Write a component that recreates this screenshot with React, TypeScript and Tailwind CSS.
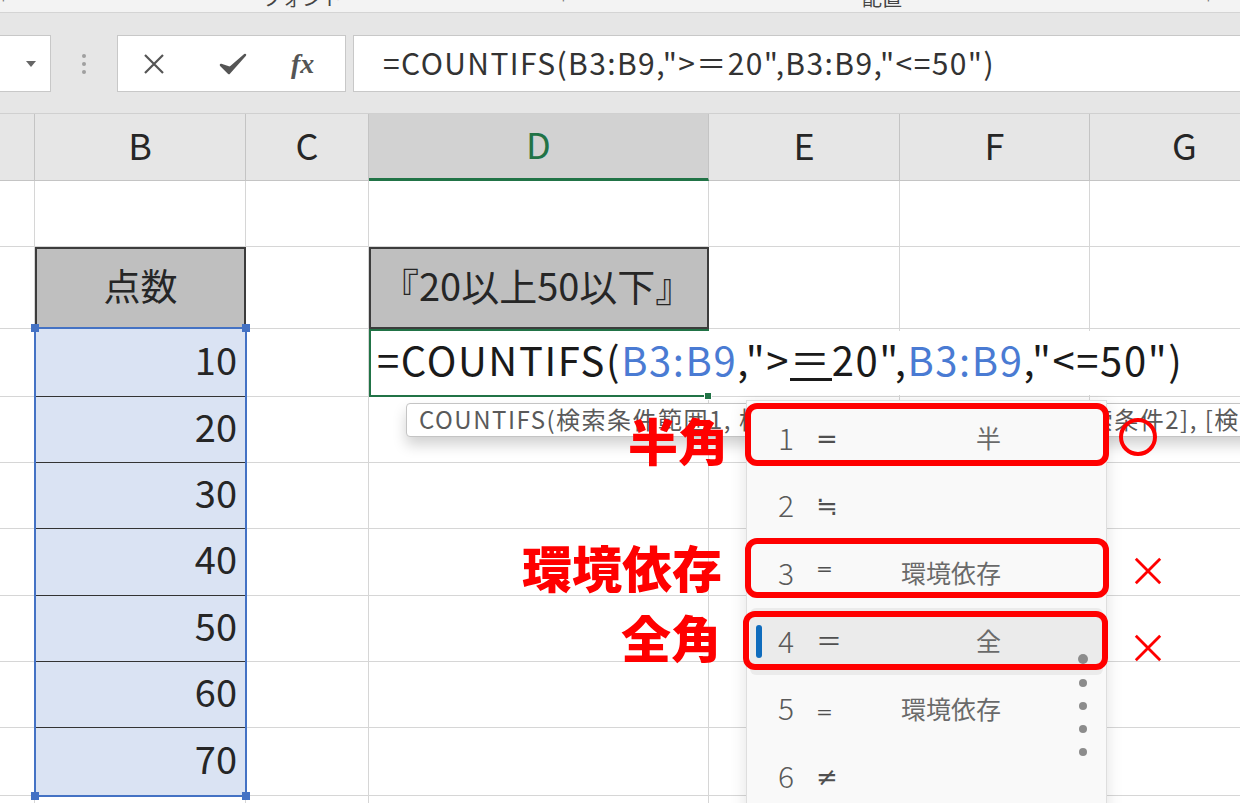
import React from "react";

const JP = "font-['Noto_Sans_CJK_JP','Noto_Sans',sans-serif]";

const colHeaders = ["", "B", "C", "D", "E", "F", "G"];
const scores = [10, 20, 30, 40, 50, 60, 70];
const rowCount = 10;

type Candidate = {
  num: string;
  sym: string;
  note?: string;
  selected?: boolean;
  symClass: string;
};

const candidates: Candidate[] = [
  { num: "1", sym: "=", note: "半", symClass: "text-[26px]" },
  { num: "2", sym: "≒", symClass: "text-[26px]" },
  { num: "3", sym: "⁼", note: "環境依存", symClass: "text-[32px] mt-[2px]" },
  { num: "4", sym: "＝", note: "全", selected: true, symClass: "text-[26px]" },
  { num: "5", sym: "₌", note: "環境依存", symClass: "text-[32px] -mt-[4px]" },
  { num: "6", sym: "≠", symClass: "text-[26px]" },
];

const XMark = ({ className }: { className?: string }) => (
  <svg viewBox="0 0 32 32" className={className}>
    <path d="M3 3 L29 29 M29 3 L3 29" stroke="#ff0000" strokeWidth="3" fill="none" />
  </svg>
);

const HeaderCell = ({ label, active }: { label: string; active?: boolean }) => (
  <div
    className={
      active
        ? "flex items-center justify-center border-r border-r-[#c4c4c4] border-b-[3px] border-b-[#217346] bg-[#d2d2d2] pb-[6px] text-[36px] leading-none text-[#217346]"
        : "flex items-center justify-center border-r border-b border-[#c4c4c4] bg-[#e6e6e6] pb-[6px] text-[36px] leading-none text-[#262626]"
    }
  >
    {label}
  </div>
);

const FormulaOverflow = () => (
  <span className="absolute left-0 top-0 z-10 flex h-full w-[865px] items-center whitespace-nowrap bg-white pb-[8px] pl-[6px] text-[40px] leading-none tracking-[1.6px] text-[#1a1a1a]">
    =COUNTIFS(<span className="text-[#4a7bd3]">B3:B9</span>,"&gt;
    <span className="border-b-[3px] border-[#1a1a1a] pb-[1px]">＝</span>
    20",<span className="text-[#4a7bd3]">B3:B9</span>,"&lt;=50")
  </span>
);

const SheetCell = ({ r, c }: { r: number; c: number }) => {
  const base = "border-r border-b border-[#d6d6d6] bg-white";
  if (r === 2 && c === 1) {
    return (
      <div className="flex items-center justify-center border-2 border-[#3c3c3c] bg-[#bfbfbf] pb-[6px] text-[37px] leading-none text-[#262626]">
        点数
      </div>
    );
  }
  if (r === 2 && c === 3) {
    return (
      <div className="flex items-center border-2 border-[#3c3c3c] bg-[#bfbfbf] pb-[6px] pl-[10px] text-[38px] leading-none text-[#262626]">
        『20以上50以下』
      </div>
    );
  }
  if (r >= 3 && r <= 9 && c === 1) {
    return (
      <div className="flex items-center justify-end border-r border-b border-r-[#d6d6d6] border-b-[#333333] bg-[#dae3f3] pb-[8px] pr-[8px] text-[38px] leading-none text-[#262626]">
        {scores[r - 3]}
      </div>
    );
  }
  if (r === 3 && c === 3) {
    return (
      <div className="relative border-2 border-[#217346] bg-white">
        <FormulaOverflow />
        <span className="absolute -bottom-[5px] -right-[5px] z-20 h-[8px] w-[8px] border border-white bg-[#217346]" />
      </div>
    );
  }
  return <div className={base} />;
};

const TopStrip = () => (
  <div className={`relative h-[13px] overflow-hidden border-b border-[#d4d4d4] bg-[#f3f3f3] ${JP}`}>
    <div className="flex -translate-y-[12px] text-[20px] leading-none text-[#444]">
      <span className="ml-[2px] w-[260px] text-[16px] text-[#777]">⌐</span>
      <span className="w-[300px]">フォント</span>
      <span className="w-[300px] text-[16px] text-[#777]">⌐</span>
      <span className="w-[345px]">配置</span>
      <span className="text-[16px] text-[#777]">⌐</span>
    </div>
  </div>
);

const FormulaBar = () => (
  <div className="flex h-[100px] items-start bg-[#e6e6e6] pt-[22px]">
    <div className="flex h-[57px] w-[51px] items-center justify-end border border-l-0 border-[#c8c8c8] bg-white pr-[14px]">
      <svg viewBox="0 0 10 6" className="h-[6px] w-[10px]">
        <path d="M0 0 L10 0 L5 6 Z" fill="#666" />
      </svg>
    </div>
    <div className="flex h-[57px] w-[66px] flex-col items-center justify-center gap-[4px]">
      <span className="h-[4px] w-[4px] rounded-full bg-[#a0a0a0]" />
      <span className="h-[4px] w-[4px] rounded-full bg-[#a0a0a0]" />
      <span className="h-[4px] w-[4px] rounded-full bg-[#a0a0a0]" />
    </div>
    <div className="flex h-[57px] w-[229px] items-center border border-[#c8c8c8] bg-white">
      <svg viewBox="0 0 24 24" className="ml-[24px] h-[24px] w-[24px]">
        <path d="M3 3 L21 21 M21 3 L3 21" stroke="#555" strokeWidth="2.2" fill="none" />
      </svg>
      <svg viewBox="0 0 28 24" className="ml-[53px] h-[24px] w-[28px]">
        <path d="M2 13 L10 21 L26 3 L11 16 Z" fill="#555" stroke="#555" strokeWidth="2.5" strokeLinejoin="round" />
      </svg>
      <span className="ml-[44px] font-['Liberation_Serif',serif] text-[28px] font-bold italic leading-none text-[#555]">
        fx
      </span>
    </div>
    <div className="ml-[7px] flex h-[57px] flex-1 items-center border border-r-0 border-[#c8c8c8] bg-white pl-[29px]">
      <span className={`${JP} whitespace-nowrap pb-[3px] text-[30px] leading-none tracking-[1.4px] text-[#333]`}>
        =COUNTIFS(B3:B9,"&gt;＝20",B3:B9,"&lt;=50")
      </span>
    </div>
  </div>
);

const Sheet = () => (
  <div className={`grid grid-cols-[35px_211px_123px_340px_191px_190px_190px] grid-rows-[67px_66px_82px_68px_66px_66px_67px_66px_66px_68px_66px] border-t border-[#d0d0d0] ${JP}`}>
    {colHeaders.map((h, i) => (
      <HeaderCell key={`h${i}`} label={h} active={h === "D"} />
    ))}
    {Array.from({ length: rowCount }).map((_, ri) =>
      colHeaders.map((_, c) => <SheetCell key={`${ri}-${c}`} r={ri + 1} c={c} />)
    )}
  </div>
);

const SelectionBox = () => (
  <div className="absolute left-[34px] top-[327px] h-[470px] w-[213px] border-2 border-[#4472c4]">
    <span className="absolute -left-[5px] -top-[5px] h-[8px] w-[8px] bg-[#4472c4]" />
    <span className="absolute -right-[5px] -top-[5px] h-[8px] w-[8px] bg-[#4472c4]" />
    <span className="absolute -bottom-[5px] -left-[5px] h-[8px] w-[8px] bg-[#4472c4]" />
    <span className="absolute -bottom-[5px] -right-[5px] h-[8px] w-[8px] bg-[#4472c4]" />
  </div>
);

const Tooltip = () => (
  <div className={`absolute left-[406px] top-[403px] flex h-[34px] w-[900px] items-center rounded-[4px] border border-[#c4c4c4] bg-white pl-[12px] shadow-[0_8px_14px_rgba(0,0,0,0.18)] ${JP}`}>
    <span className="whitespace-nowrap pb-[2px] text-[24px] leading-none tracking-[1.5px] text-[#5a5a5a]">
      COUNTIFS(検索条件範囲1, 検索条件1, [検索条件範囲2, 検索条件2], [検索条件範囲3, 検索条件3], ...)
    </span>
  </div>
);

const CandidateList = () => (
  <div className={`absolute left-[746px] top-[400px] h-[420px] w-[361px] border border-[#dedede] bg-[#f9f9f9] pt-[4px] shadow-[0_4px_16px_rgba(0,0,0,0.12)] ${JP}`}>
    {candidates.map((cand) => (
      <div
        key={cand.num}
        className={
          cand.selected
            ? "relative mx-[3px] flex h-[67.6px] items-center rounded-[6px] bg-[#ebebeb] pl-[28px]"
            : "relative flex h-[67.6px] items-center pl-[31px]"
        }
      >
        {cand.selected && (
          <span className="absolute left-[6px] top-[17px] h-[33px] w-[6px] rounded-full bg-[#0f6cbd]" />
        )}
        <span className="w-[38px] pb-[4px] text-[30px] font-light leading-none text-[#5a5a5a]">{cand.num}</span>
        <span className={`w-[60px] leading-none text-[#505050] font-['DejaVu_Sans','Noto_Sans_CJK_JP',sans-serif] ${cand.symClass}`}>
          {cand.sym}
        </span>
        <span className="w-[125px] pb-[2px] text-right text-[25px] leading-none text-[#6a6a6a]">{cand.note}</span>
      </div>
    ))}
    <div className="absolute left-[331px] top-[253px] flex flex-col items-center gap-[15px]">
      <span className="h-[10px] w-[10px] rounded-full bg-[#8c8c8c]" />
      <span className="h-[8px] w-[8px] rounded-full bg-[#8c8c8c]" />
      <span className="h-[8px] w-[8px] rounded-full bg-[#8c8c8c]" />
      <span className="h-[8px] w-[8px] rounded-full bg-[#8c8c8c]" />
      <span className="h-[8px] w-[8px] rounded-full bg-[#8c8c8c]" />
    </div>
  </div>
);

const Annotations = () => (
  <>
    <div className="absolute left-[745px] top-[403px] h-[63px] w-[364px] rounded-[12px] border-[6px] border-[#ff0000]" />
    <div className="absolute left-[745px] top-[538px] h-[60px] w-[364px] rounded-[12px] border-[6px] border-[#ff0000]" />
    <div className="absolute left-[743px] top-[611px] h-[59px] w-[365px] rounded-[12px] border-[6px] border-[#ff0000]" />

    <div className={`absolute left-[628px] top-[414px] text-[50px] font-black leading-none text-[#ff0000] ${JP}`}>半角</div>
    <div className={`absolute left-[522px] top-[541px] text-[50px] font-black leading-none text-[#ff0000] ${JP}`}>環境依存</div>
    <div className={`absolute left-[621px] top-[611px] text-[50px] font-black leading-none text-[#ff0000] ${JP}`}>全角</div>

    <div className="absolute left-[1119px] top-[418px] h-[38px] w-[38px] rounded-full border-[4px] border-[#ff0000]" />
    <XMark className="absolute left-[1133px] top-[556px] h-[30px] w-[30px]" />
    <XMark className="absolute left-[1133px] top-[633px] h-[30px] w-[30px]" />
  </>
);

export default function App() {
  return (
    <div className="relative h-[803px] w-[1240px] overflow-hidden bg-white">
      <TopStrip />
      <FormulaBar />
      <Sheet />
      <SelectionBox />
      <Tooltip />
      <CandidateList />
      <Annotations />
    </div>
  );
}
